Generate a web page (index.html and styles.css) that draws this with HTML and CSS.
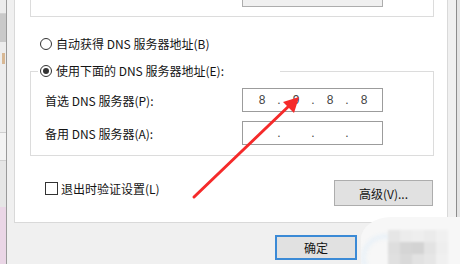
FILE: index.html
```html
<!DOCTYPE html>
<html lang="zh-CN">
<head>
<meta charset="utf-8">
<title>DNS</title>
<link rel="stylesheet" href="styles.css">
</head>
<body>
<div class="screen">
  <div class="behind">
    <div class="b b1"></div>
    <div class="b b2"></div>
    <div class="b b3"><span class="mark"></span></div>
    <div class="b b4"></div>
    <div class="b b5"></div>
    <div class="b b6"></div>
  </div>
  <div class="edge"></div>
  <div class="dialog">
    <div class="panel">
      <div class="group1"><div class="tb"></div></div>
      <div class="radio-row r1"><span class="radio"></span><span>自动获得 DNS 服务器地址(B)</span></div>
      <fieldset class="group2">
        <legend><span class="radio-row"><span class="radio checked"></span><span>使用下面的 DNS 服务器地址(E):</span></span></legend>
        <div class="ip-row">
          <span class="lbl">首选 DNS 服务器(P):</span>
          <div class="ip"><span>8</span><span>.</span><span>9</span><span>.</span><span>8</span><span>.</span><span>8</span></div>
        </div>
        <div class="ip-row">
          <span class="lbl">备用 DNS 服务器(A):</span>
          <div class="ip"><span></span><span>.</span><span></span><span>.</span><span></span><span>.</span><span></span></div>
        </div>
      </fieldset>
      <div class="bottom-row">
        <div class="check"><span class="box"></span><span>退出时验证设置(L)</span></div>
        <button class="btn adv">高级(V)...</button>
      </div>
    </div>
    <div class="actions">
      <button class="btn ok">确定</button>
      <button class="btn cancel">取消</button>
    </div>
  </div>
  <div class="edge dark"></div>
  <div class="rest"></div>

  <div class="blur">
    <div class="halo"></div>
    <div class="tiles">
      <span class="t1"></span><span class="t2"></span><span class="t3"></span><span class="t4"></span><span class="t5"></span>
      <span class="t6"></span><span class="t7"></span><span class="t8"></span><span class="t9"></span><span class="t10"></span>
      <span class="t11"></span><span class="t12"></span><span class="t13"></span><span class="t14"></span><span class="t15"></span>
    </div>
  </div>

  <svg class="arrow" width="460" height="264" viewBox="0 0 460 264">
    <line x1="194" y1="197" x2="290" y2="105" stroke="#f52a2a" stroke-width="3" stroke-linecap="round"/>
    <polygon points="299,97 283,102 294,113" fill="#f52a2a"/>
  </svg>
</div>
</body>
</html>
```

FILE: styles.css
```css
* { box-sizing: border-box; }
html, body { margin: 0; padding: 0; }
body {
  width: 460px;
  height: 264px;
  overflow: hidden;
  font-family: "Noto Sans CJK SC", "Microsoft YaHei", sans-serif;
  font-size: 12px;
  color: #141414;
  background: #f0f0f0;
}
.screen {
  position: relative;
  display: flex;
  width: 460px;
  height: 264px;
  overflow: hidden;
}

/* window behind, on the left */
.behind { width: 6px; flex: none; display: flex; flex-direction: column; }
.b1 { height: 14px; background: #ececec; border-bottom: 1px solid #d2d2d2; }
.b2 { height: 28px; background: #c9c9c9; }
.b3 { height: 91px; background: #ededed; border-bottom: 1px solid #cfcfcf; padding-top: 11px; }
.mark { display: block; width: 3px; height: 11px; margin-left: 2px; background: #d8b894; }
.b4 { height: 28px; background: #f3f3f3; border-bottom: 1px solid #d0d0d0; }
.b5 { height: 46px; background: #e6e6e6; }
.b6 { flex: 1; background: #ead6e6; }
.edge { width: 1px; flex: none; background: #9a9a9a; }
.edge.dark { background: #8c8c8c; }
.rest { width: 3px; flex: none; background: #e4e4e4; }

/* dialog */
.dialog {
  flex: none;
  width: 449px;
  display: flex;
  flex-direction: column;
  padding: 0 8px 0 7px;
  background: #f0f0f0;
}
.panel {
  margin-top: -30px;
  background: #fff;
  border: 1px solid #d9d9d9;
  padding: 0 13px 16px 15px;
}
.group1 {
  margin-top: 4px;
  height: 42px;
  border: 1px solid #dcdcdc;
  padding: 7px 0 0 211px;
}
.tb {
  width: 141px;
  height: 24px;
  border: 1px solid #adadad;
  background: #f0f0f0;
}
.radio-row {
  display: flex;
  align-items: center;
  height: 16px;
  line-height: 16px;
  white-space: nowrap;
}
.r1 { margin-top: 19px; padding-left: 10px; }
.radio {
  width: 12px;
  height: 12px;
  flex: none;
  border: 1px solid #333;
  border-radius: 50%;
  background: #fff;
  margin-right: 4px;
  display: flex;
  align-items: center;
  justify-content: center;
}
.radio.checked::after {
  content: "";
  width: 6px;
  height: 6px;
  border-radius: 50%;
  background: #333;
}
.group2 {
  margin: 11px 0 0 0;
  padding: 9px 0 10px 0;
  border: 1px solid #dcdcdc;
  min-width: 0;
}
.group2 legend {
  margin-left: 7px;
  padding: 0 2px;
  width: 242px;
  line-height: 16px;
}
.ip-row {
  display: grid;
  grid-template-columns: 197px 141px;
  align-items: center;
  height: 24px;
  padding-left: 14px;
  white-space: nowrap;
}
.ip-row + .ip-row { margin-top: 9px; }
.ip {
  display: grid;
  grid-template-columns: 30px 4px 30px 4px 30px 4px 30px;
  align-items: center;
  height: 24px;
  border: 1px solid #9c9c9c;
  padding-left: 4px;
  text-align: center;
  font-family: "Liberation Sans", Arial, sans-serif;
  font-size: 12px;
  color: #444;
  background: #fff;
}
.bottom-row {
  display: flex;
  justify-content: space-between;
  align-items: flex-start;
  margin-top: 24px;
  padding: 0 1px 0 15px;
}
.check { display: flex; align-items: center; height: 16px; white-space: nowrap; }
.box {
  width: 13px;
  height: 13px;
  border: 1px solid #333;
  background: #fff;
  margin-right: 3px;
}
.btn {
  font: inherit;
  color: #141414;
  background: #e1e1e1;
  border: 1px solid #adadad;
  padding: 0;
  margin: 0;
}
.adv { width: 99px; height: 26px; }
.actions {
  display: flex;
  justify-content: flex-end;
  gap: 9px;
  margin-top: 12px;
}
.ok, .cancel { width: 82px; height: 25px; }
.ok { border: 2px solid #3b8ad6; }

/* blurred watermark blob, bottom right */
.blur {
  position: absolute;
  left: 361px;
  top: 217px;
  width: 99px;
  height: 47px;
  background: #f7f7f7;
  border-top-left-radius: 30px 22px;
  overflow: hidden;
}
.halo {
  position: absolute;
  left: 1px;
  top: 18px;
  width: 46px;
  height: 46px;
  border: 3px solid #e2eef8;
  border-radius: 50%;
  filter: blur(2px);
}
.tiles {
  position: absolute;
  left: 27px;
  top: 13px;
  display: grid;
  grid-template-columns: repeat(5, 12px);
  grid-template-rows: repeat(3, 12px);
  filter: blur(1.2px);
}
.t1 { background: #e6e6e6; } .t2 { background: #ececec; } .t3 { background: #eeeeee; } .t4 { background: #ebebeb; } .t5 { background: #f0f0f0; }
.t6 { background: #dedede; } .t7 { background: #d5d5d5; } .t8 { background: #d3d3d3; } .t9 { background: #e3e3e3; } .t10 { background: #eeeeee; }
.t11 { background: #e0e0e0; } .t12 { background: #d9d9d9; } .t13 { background: #e2e2e2; } .t14 { background: #e6e6e6; } .t15 { background: #f0f0f0; }

.arrow {
  position: absolute;
  left: 0;
  top: 0;
  pointer-events: none;
}
```
